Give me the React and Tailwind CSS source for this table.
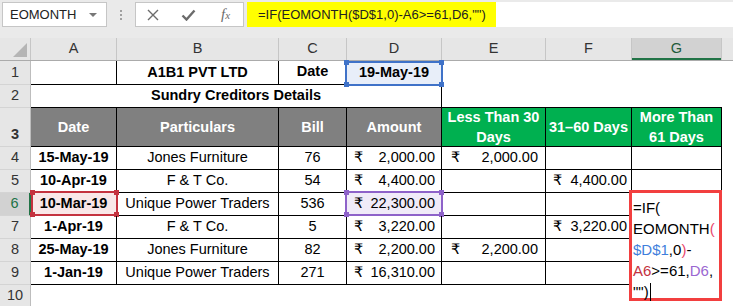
import React from "react";

const font = "font-['Liberation_Sans',Arial,'DejaVu_Sans',sans-serif]";
const bk = "border-r border-b border-black";

const rows = [
  { n: 4, date: "15-May-19", who: "Jones Furniture", bill: "76", amt: "2,000.00", e: "2,000.00", f: "" },
  { n: 5, date: "10-Apr-19", who: "F & T Co.", bill: "54", amt: "4,400.00", e: "", f: "4,400.00" },
  { n: 6, date: "10-Mar-19", who: "Unique Power Traders", bill: "536", amt: "22,300.00", e: "", f: "", active: true },
  { n: 7, date: "1-Apr-19", who: "F & T Co.", bill: "5", amt: "3,220.00", e: "", f: "3,220.00" },
  { n: 8, date: "25-May-19", who: "Jones Furniture", bill: "82", amt: "2,200.00", e: "2,200.00", f: "" },
  { n: 9, date: "1-Jan-19", who: "Unique Power Traders", bill: "271", amt: "16,310.00", e: "", f: "" },
];

// range highlight box with square handles on the corners
const Handles = ({ color }) => (
  <>
    <span className={`absolute -left-[3px] -top-[3px] w-[5px] h-[5px] ${color}`} />
    <span className={`absolute -right-[3px] -top-[3px] w-[5px] h-[5px] ${color}`} />
    <span className={`absolute -left-[3px] -bottom-[3px] w-[5px] h-[5px] ${color}`} />
    <span className={`absolute -right-[3px] -bottom-[3px] w-[5px] h-[5px] ${color}`} />
  </>
);

const RowHead = ({ n, active, tall }) => (
  <div
    className={`w-[31px] shrink-0 flex justify-center border-b border-b-[#d4d4d4] ${
      tall ? "items-end pb-[2px]" : "items-center"
    } ${
      active
        ? "bg-[#d2d2d2] text-[#217346] border-r-2 border-r-[#217346]"
        : "bg-[#e6e6e6] text-[#333] border-r border-r-[#bdbdbd]"
    }`}
  >
    {n}
  </div>
);

const Money = ({ value, cls = "pl-[7px] pr-[6px]" }) =>
  value ? (
    <div className={`flex w-full justify-between items-center ${cls}`}>
      <span>₹</span>
      <span>{value}</span>
    </div>
  ) : null;

function FormulaBar() {
  return (
    <div className="h-[38px] bg-[#eaeaea] flex items-start pt-[2px]">
      <div className="ml-[2px] w-[105px] h-[25px] bg-white border border-[#c6c6c6] flex items-center justify-between pl-[7px] pr-[9px] text-[13px] text-[#222]">
        <span>EOMONTH</span>
        <span className="w-0 h-0 border-l-[4px] border-r-[4px] border-t-[4px] border-l-transparent border-r-transparent border-t-[#777]" />
      </div>
      <div className="w-[28px] h-[25px] flex flex-col items-center justify-center gap-[2px]">
        <span className="w-[2px] h-[2px] bg-[#a0a0a0]" />
        <span className="w-[2px] h-[2px] bg-[#a0a0a0]" />
        <span className="w-[2px] h-[2px] bg-[#a0a0a0]" />
      </div>
      <div className="w-[109px] h-[25px] bg-white border border-[#c6c6c6] flex items-center">
        <svg width="12" height="12" viewBox="0 0 12 12" className="ml-[11px]">
          <path d="M1 1 L11 11 M11 1 L1 11" stroke="#6b6b6b" strokeWidth="1.4" fill="none" />
        </svg>
        <svg width="15" height="12" viewBox="0 0 15 12" className="ml-[22px]">
          <path d="M1.5 6.5 L5.5 10.5 L13.5 1.5" stroke="#6b6b6b" strokeWidth="2.4" fill="none" />
        </svg>
        <span className="ml-[25px] italic font-['Liberation_Serif',serif] text-[15px] text-[#6b6b6b] leading-none">
          f<span className="text-[11px]">x</span>
        </span>
      </div>
      <div className="ml-[3px] flex-1 h-[25px] bg-white flex">
        <div className="w-[249px] h-full bg-[#ffff00] flex items-center pl-[11px] text-[13px] text-[#222] whitespace-nowrap">
          =IF(EOMONTH($D$1,0)-A6&gt;=61,D6,"")
        </div>
      </div>
    </div>
  );
}

function ColHeads() {
  const cols = [
    ["A", "w-[86px]"],
    ["B", "w-[162px]"],
    ["C", "w-[68px]"],
    ["D", "w-[95px]"],
    ["E", "w-[104px]"],
    ["F", "w-[86px]"],
  ];
  return (
    <div className="flex h-[23px] bg-[#e6e6e6] border-b border-[#ababab] text-[14.5px] text-[#333]">
      <div className="w-[31px] shrink-0 border-r border-[#c6c6c6] relative">
        <svg width="16" height="16" viewBox="0 0 16 16" className="absolute left-[12px] top-[4px]">
          <path d="M15 1 L15 15 L1 15 Z" fill="#b5b5b5" />
        </svg>
      </div>
      {cols.map(([c, w]) => (
        <div key={c} className={`${w} shrink-0 border-r border-[#c6c6c6] flex items-center justify-center`}>
          {c}
        </div>
      ))}
      <div className="w-[90px] shrink-0 border-r border-[#c6c6c6] bg-[#d2d2d2] text-[#1e5a3a] shadow-[inset_0_-2px_0_#217346] flex items-center justify-center">
        G
      </div>
      <div className="flex-1" />
    </div>
  );
}

export default function App() {
  return (
    <div className={`relative w-[733px] h-[306px] overflow-hidden bg-white text-black ${font}`}>
      <FormulaBar />
      <ColHeads />

      <div className="text-[14.5px]">
        {/* row 1 */}
        <div className="flex h-[24px]">
          <RowHead n="1" />
          <div className={`w-[86px] shrink-0 ${bk}`} />
          <div className={`w-[162px] shrink-0 ${bk} flex items-center justify-center font-bold`}>A1B1 PVT LTD</div>
          <div className={`w-[68px] shrink-0 ${bk} flex items-end justify-center pb-[1px] font-bold`}>Date</div>
          <div className={`w-[95px] shrink-0 ${bk} relative bg-[#e8eef9] flex items-center justify-center font-bold`}>
            19-May-19
            <div className="absolute -left-[2px] top-0 -right-[2px] -bottom-[2px] border-2 border-[#3f72c8]">
              <Handles color="bg-[#3f72c8]" />
            </div>
          </div>
          <div className="flex-1" />
        </div>

        {/* row 2 */}
        <div className="flex h-[23px]">
          <RowHead n="2" />
          <div className={`w-[411px] shrink-0 ${bk} flex items-center justify-center font-bold`}>
            Sundry Creditors Details
          </div>
          <div className="w-[280px] shrink-0 border-b border-black" />
          <div className="flex-1" />
        </div>

        {/* row 3 */}
        <div className="flex h-[39px] font-bold text-white leading-[20px] text-center">
          <RowHead n="3" tall />
          <div className={`w-[86px] shrink-0 ${bk} bg-[#808080] flex items-center justify-center`}>Date</div>
          <div className={`w-[162px] shrink-0 ${bk} bg-[#808080] flex items-center justify-center`}>Particulars</div>
          <div className={`w-[68px] shrink-0 ${bk} bg-[#808080] flex items-center justify-center`}>Bill</div>
          <div className={`w-[95px] shrink-0 ${bk} bg-[#808080] flex items-center justify-center`}>Amount</div>
          <div className={`w-[104px] shrink-0 ${bk} bg-[#00b050] flex items-center justify-center`}>
            Less Than 30<br />Days
          </div>
          <div className={`w-[86px] shrink-0 ${bk} bg-[#00b050] flex items-center justify-center`}>31–60 Days</div>
          <div className={`w-[90px] shrink-0 ${bk} bg-[#00b050] flex items-center justify-center`}>
            More Than<br />61 Days
          </div>
          <div className="flex-1" />
        </div>

        {/* rows 4-9 */}
        {rows.map((r) => (
          <div key={r.n} className="flex h-[23px]">
            <RowHead n={r.n} active={r.active} />
            <div
              className={`w-[86px] shrink-0 ${bk} relative flex items-center justify-center font-bold ${
                r.active ? "bg-[#f9e7e8]" : ""
              }`}
            >
              {r.date}
              {r.active && (
                <div className="absolute left-0 -top-[2px] -right-[2px] -bottom-[1px] border-2 border-[#c4323f]">
                  <Handles color="bg-[#c4323f]" />
                </div>
              )}
            </div>
            <div className={`w-[162px] shrink-0 ${bk} flex items-center justify-center`}>{r.who}</div>
            <div className={`w-[68px] shrink-0 ${bk} flex items-center justify-center`}>{r.bill}</div>
            <div className={`w-[95px] shrink-0 ${bk} relative flex ${r.active ? "bg-[#f0ebf8]" : ""}`}>
              <Money value={r.amt} />
              {r.active && (
                <div className="absolute -left-[2px] -top-[2px] -right-[2px] -bottom-[1px] border-2 border-[#8e62c9]">
                  <Handles color="bg-[#8e62c9]" />
                </div>
              )}
            </div>
            <div className={`w-[104px] shrink-0 ${bk} flex`}>
              <Money value={r.e} cls="pl-[9px] pr-[7px]" />
            </div>
            <div className={`w-[86px] shrink-0 ${bk} flex`}>
              <Money value={r.f} cls="pl-[7px] pr-[4px]" />
            </div>
            <div className={`w-[90px] shrink-0 ${bk}`} />
            <div className="flex-1" />
          </div>
        ))}

        {/* row 10 */}
        <div className="flex h-[22px]">
          <RowHead n="10" />
          <div className="flex-1" />
        </div>
      </div>

      {/* in-cell edit of G6 */}
      <div className="absolute left-[629px] top-[190px] w-[93px] h-[111px] border-[3px] border-[#f23f3f] bg-white pl-[1px] pt-[4px] text-[15px] leading-[21px] whitespace-nowrap">
        <div>=IF(</div>
        <div>
          EOMONTH<span className="text-[#e8476e]">(</span>
        </div>
        <div>
          <span className="text-[#3f7fdc]">$D$1</span>,0<span className="text-[#e8476e]">)</span>-
        </div>
        <div>
          <span className="text-[#c4323f]">A6</span>&gt;=61,<span className="text-[#9a67d1]">D6</span>,
        </div>
        <div className="flex items-center">
          "")<span className="ml-[1px] w-[1px] h-[18px] bg-black" />
        </div>
      </div>
    </div>
  );
}
